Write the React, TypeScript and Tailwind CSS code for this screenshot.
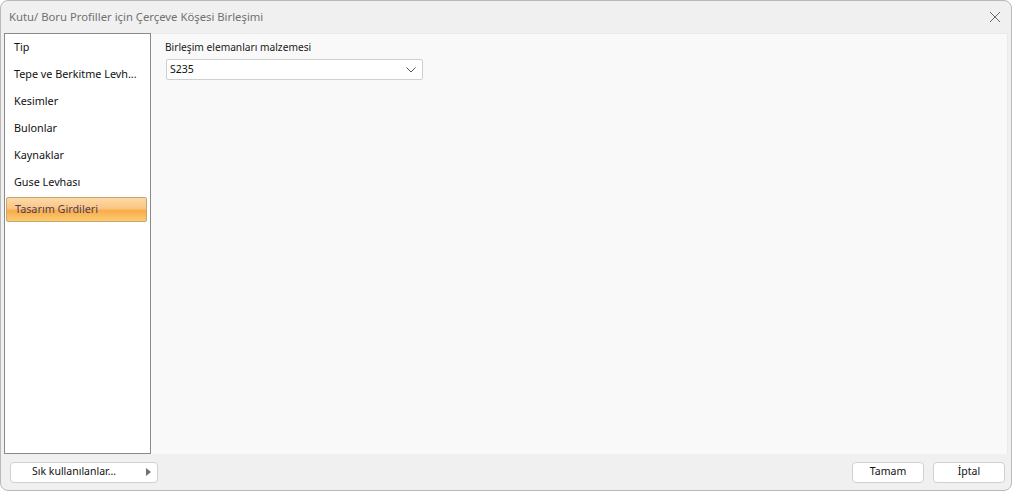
import React from 'react';

const items = [
  'Tip',
  'Tepe ve Berkitme Levh...',
  'Kesimler',
  'Bulonlar',
  'Kaynaklar',
  'Guse Levhası',
  'Tasarım Girdileri',
];

export default function App() {
  const selected = 6;

  return (
    <div className="w-[1013px] h-[491px] bg-white overflow-hidden">
      <div className="w-[1012px] h-[491px] flex flex-col bg-[#f0f0f0] border border-[#b9b9b9] rounded-lg overflow-hidden font-['Noto_Sans',sans-serif]">
        {/* title bar */}
        <div className="h-[32px] shrink-0 flex items-center justify-between pl-[8px] pr-[10px]">
          <span className="text-[11.3px] text-[#707070]">Kutu/ Boru Profiller için Çerçeve Köşesi Birleşimi</span>
          <svg width="12" height="12" viewBox="0 0 12 12" className="text-[#6a6a6a]">
            <path d="M1 1 L11 11 M11 1 L1 11" stroke="currentColor" strokeWidth="1" fill="none" />
          </svg>
        </div>

        {/* body */}
        <div className="flex-1 flex pl-[3px] pr-[3px] min-h-0">
          <div className="w-[147px] shrink-0 bg-white border border-[#8a8a8a]">
            {items.map((it, i) =>
              i === selected ? (
                <div
                  key={it}
                  className="h-[25px] my-[1px] ml-[1px] mr-[3px] flex items-center pl-[8px] border border-[#c4a66e] rounded-[2px] bg-[linear-gradient(to_bottom,#fcd9a8_0%,#fbc682_45%,#f8ad48_55%,#fccb75_100%)] text-[10.8px] text-[#4a3d62] whitespace-nowrap"
                >
                  {it}
                </div>
              ) : (
                <div
                  key={it}
                  className="h-[27px] flex items-center pl-[9px] text-[10.8px] text-[#111] whitespace-nowrap"
                >
                  {it}
                </div>
              )
            )}
          </div>
          <div className="flex-1 bg-[#f9f9f9] border-t border-r border-[#ebebeb] pl-[14px] pt-[5px]">
            <div className="text-[10.2px] text-[#1a1a1a] leading-[16px]">Birleşim elemanları malzemesi</div>
            <div className="mt-[4px] ml-[1px] w-[257px] h-[21px] bg-white border border-[#cfcfcf] rounded-[2px] flex items-center justify-between pl-[3px] pr-[6px]">
              <span className="text-[10.5px] text-[#111]">S235</span>
              <svg width="10" height="6" viewBox="0 0 10 6">
                <path d="M0.5 0.5 L5 5 L9.5 0.5" stroke="#555" strokeWidth="1" fill="none" />
              </svg>
            </div>
          </div>
        </div>

        {/* footer */}
        <div className="h-[36px] shrink-0 flex items-center justify-between pl-[9px] pr-[6px]">
          <button className="w-[148px] h-[21px] bg-white border border-[#d0d0d0] rounded-[4px] flex items-center pl-[21px] pr-[6px] text-[10.5px] text-[#111]">
            <span className="flex-1 text-left">Sık kullanılanlar…</span>
            <svg width="5" height="8" viewBox="0 0 5 8">
              <path d="M0 0 L5 4 L0 8 Z" fill="#707070" />
            </svg>
          </button>
          <div className="flex gap-[9px]">
            <button className="w-[72px] h-[21px] bg-white border border-[#d0d0d0] rounded-[4px] text-[10.5px] text-[#111]">Tamam</button>
            <button className="w-[72px] h-[21px] bg-white border border-[#d0d0d0] rounded-[4px] text-[10.5px] text-[#111]">İptal</button>
          </div>
        </div>
      </div>
    </div>
  );
}
